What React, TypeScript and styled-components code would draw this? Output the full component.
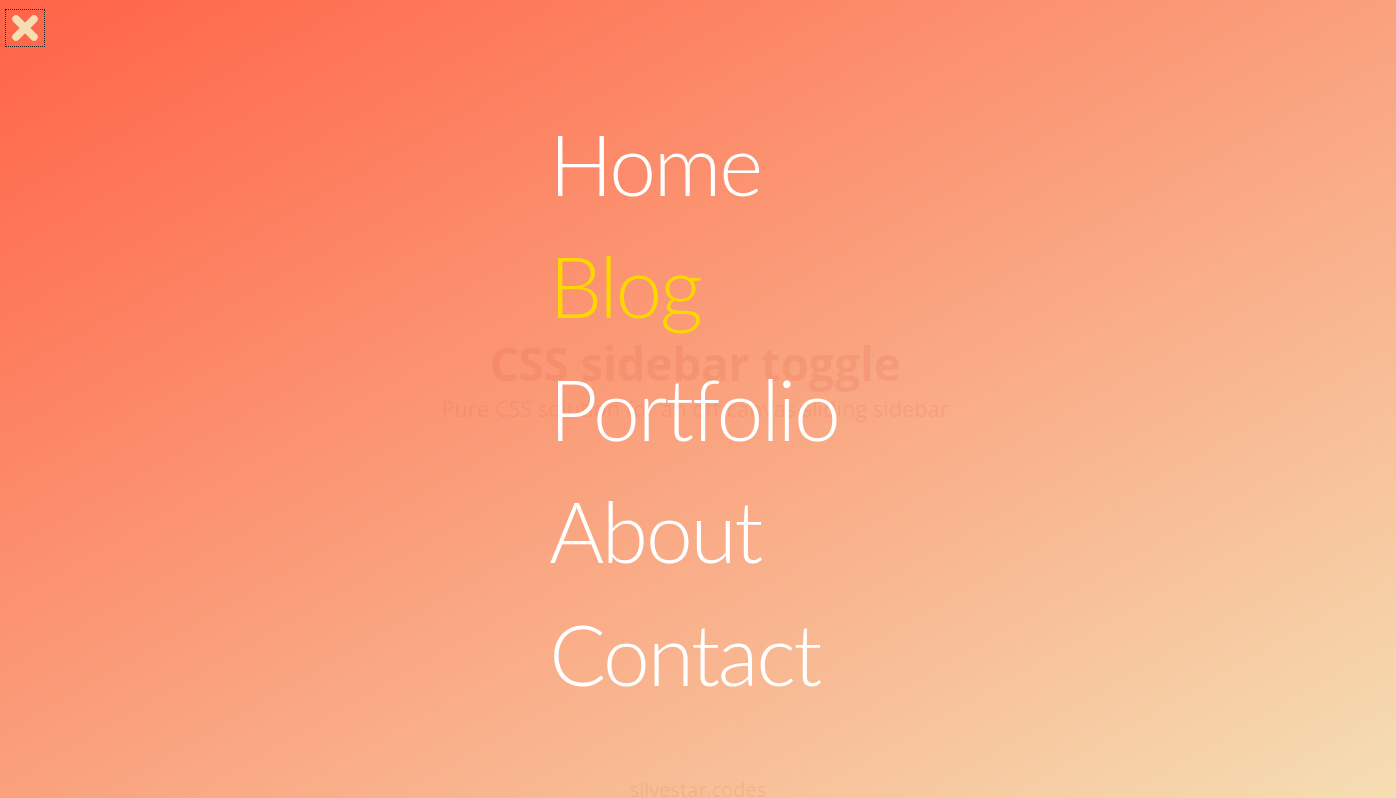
import React from 'react';
import styled, { createGlobalStyle } from 'styled-components';

const GlobalStyle = createGlobalStyle`
  html, body {
    margin: 0;
    padding: 0;
    height: 100%;
  }

  body {
    font-family: "Open Sans", "Noto Sans", sans-serif;
    background: linear-gradient(to bottom right, tomato, wheat);
    background-attachment: fixed;
    overflow: hidden;
  }
`;

const Page = styled.div`
  height: 100vh;
  display: flex;
  flex-direction: column;
  align-items: center;
  color: rgba(215, 75, 50, 0.12);
`;

const Main = styled.main`
  flex: 1;
  display: flex;
  flex-direction: column;
  align-items: center;
  justify-content: center;
  text-align: center;
  padding-bottom: 16px;
  padding-right: 6px;
`;

const Title = styled.h1`
  margin: 0;
  font-size: 46px;
  font-weight: 700;
  line-height: 1.2;
  letter-spacing: -0.3px;
`;

const Subtitle = styled.p`
  margin: 4px 0 0;
  font-size: 21.8px;
  font-weight: 400;
  line-height: 1.3;
`;

const Footer = styled.footer`
  height: 22px;
  font-size: 20px;
  line-height: 28px;
`;

const Overlay = styled.nav`
  position: fixed;
  inset: 0;
  display: flex;
  align-items: center;
  justify-content: center;
`;

const MenuList = styled.ul`
  list-style: none;
  margin: 0;
  padding: 20px 8px 0 0;
`;

const MenuItem = styled.li`
  margin: 0;
`;

const MenuLink = styled.a<{ $active?: boolean }>`
  display: block;
  color: ${p => (p.$active ? '#ffd700' : '#fff')};
  text-decoration: none;
  font-family: Lato, "Open Sans", sans-serif;
  font-weight: 300;
  font-size: 84px;
  line-height: 122.5px;
  letter-spacing: -2.2px;
`;

const CloseButton = styled.button`
  position: fixed;
  top: 10px;
  left: 6px;
  width: 38px;
  height: 36px;
  padding: 0;
  border: 0;
  background: transparent;
  outline: 1px dotted #222;
  display: flex;
  align-items: center;
  justify-content: center;
  cursor: pointer;
`;

const links = ['Home', 'Blog', 'Portfolio', 'About', 'Contact'];

const App = () => (
  <>
    <GlobalStyle />
    <Page>
      <Main>
        <Title>CSS sidebar toggle</Title>
        <Subtitle>Pure CSS solution for an off-canvas sliding sidebar</Subtitle>
      </Main>
      <Footer>silvestar.codes</Footer>
    </Page>
    <Overlay>
      <MenuList>
        {links.map(name => (
          <MenuItem key={name}>
            <MenuLink href="#" $active={name === 'Blog'}>
              {name}
            </MenuLink>
          </MenuItem>
        ))}
      </MenuList>
    </Overlay>
    <CloseButton aria-label="Close menu">
      <svg width="34" height="34" viewBox="0 0 34 34">
        <path
          d="M8 8 L26 26 M26 8 L8 26"
          stroke="wheat"
          strokeWidth="7.5"
          strokeLinecap="round"
          fill="none"
        />
      </svg>
    </CloseButton>
  </>
);

export default App;
